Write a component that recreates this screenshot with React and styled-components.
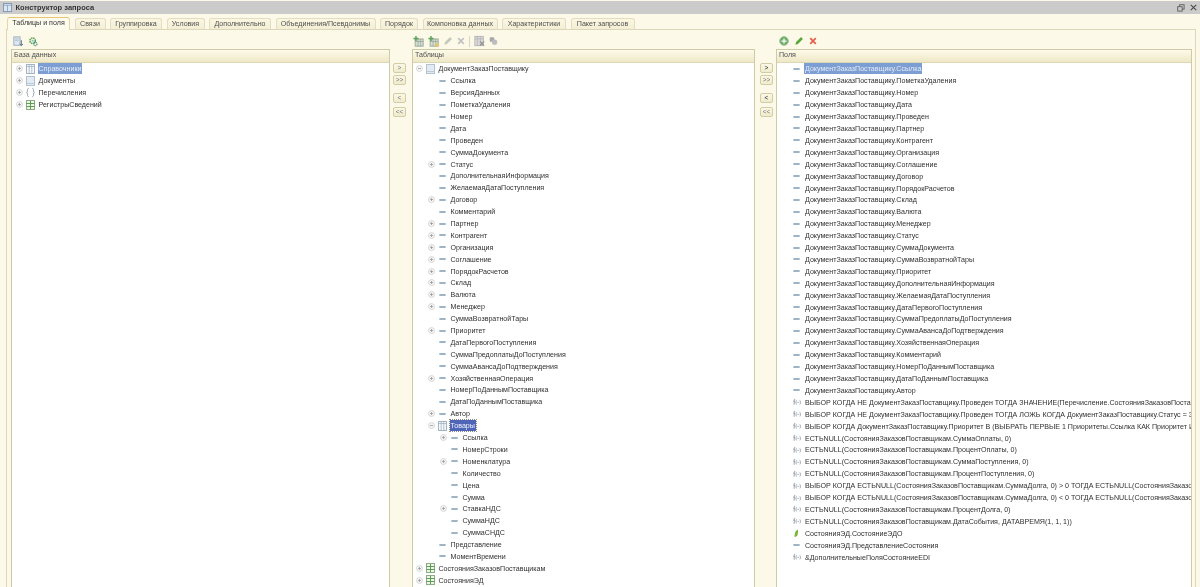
import React from "react";
import styled, { createGlobalStyle } from "styled-components";

const Global = createGlobalStyle`
  html, body { margin: 0; padding: 0; background: #fcf9e8; }
  #root { width: 1200px; height: 587px; overflow: hidden; }
`;

const Page = styled.div`
  width: 1200px; height: 587px; overflow: hidden; background: #fcf9e8;
  font-family: "Liberation Sans", Arial, sans-serif; font-size: 7.1px; color: #303030;
  display: flex; flex-direction: column; padding-top: 1px; box-sizing: border-box;
  filter: blur(0.3px);
`;
const TitleBar = styled.div`
  height: 13px; flex: none; background: #cbcbcb; display: flex; align-items: center; padding: 0 3px 0 3px;
`;
const TitleText = styled.span`
  margin-left: 3.500px; font-weight: 700; font-size: 7.5px; color: #333; flex: 1;
`;
const TabBar = styled.div`
  height: 16px; flex: none; display: flex; align-items: flex-end; padding-left: 7px; gap: 4.5px;
  position: relative; z-index: 1; margin-bottom: -1px;
`;
const Tab = styled.div`
  height: 12px; box-sizing: border-box; width: ${p => p.$w}px; flex: none; text-align: center; line-height: 11px;
  border: 1px solid ${p => (p.$active ? "#e8d7a6" : "#e2ddc0")}; border-bottom: ${p => (p.$active ? "none" : "1px solid #dcd7b8")};
  border-radius: 3px 3px 0 0; color: #505050;
  background: ${p => (p.$active ? "#fdfbee" : "linear-gradient(#fbf7e2, #f3eed4)")};
  ${p => p.$active && "height: 13px; color: #333; border-top: 1px solid #e6c47a;"}
`;
const Body = styled.div`
  flex: 1; min-height: 0; margin: 0 4px 0 6px; border: 1px solid #dcd7b8; border-bottom: none; padding: 3px 0 0 4px;
  display: grid; grid-template-columns: 379px 22px 343px 21px 416px; grid-template-rows: 16px 1fr;
`;
const Toolbar = styled.div`
  display: flex; align-items: center; gap: ${p => p.$gap}px; padding-left: ${p => p.$pad}px; height: 16px;
`;
const Sep = styled.div` width: 1px; height: 11px; background: #dcd8c0; `;
const Panel = styled.section`
  grid-row: 2; border: 1px solid #cfcaa6; border-bottom: none; background: #fff; min-width: 0; overflow: hidden;
  display: flex; flex-direction: column;
`;
const PanelHead = styled.div`
  height: 12px; flex: none; line-height: 11px; padding-left: 2px; color: #505050;
  background: linear-gradient(#fdfaea, #efe8c6); border-bottom: 1px solid #dcd7b4;
`;
const List = styled.div` padding-top: 0; `;
const Row = styled.div`
  height: ${p => p.$h}px; display: flex; align-items: center; padding-left: ${p => p.$indent}px; white-space: nowrap;
`;
const Slot = styled.span`
  width: ${p => p.$w}px; flex: none; display: flex; align-items: center; justify-content: center;
`;
const Label = styled.span`
  margin-left: 2px; padding: 0 1px; line-height: 12px; height: 11px; flex: none;
  ${p => p.$sel === "soft" && "background: #7d9ed2; color: #e4ebf7;"}
  ${p => p.$sel === "hard" && "background: #4f66b8; color: #f4f5fb; outline: 1px dotted #8b8b8b;"}
`;
const Arrows = styled.div`
  grid-row: 2; display: flex; flex-direction: column; align-items: center; padding-top: 14px;
  padding-left: ${p => p.$pl}px; padding-right: ${p => p.$pr}px;
`;
const ArrowBtn = styled.div`
  width: 13px; height: 10px; box-sizing: border-box; border: 1px solid #d2cda6; border-radius: 2px;
  background: linear-gradient(#fbf8e6, #f0ebcd); font-size: 6.5px; line-height: 8px; text-align: center;
  color: ${p => (p.$strong ? "#222" : "#777")}; margin-bottom: ${p => p.$mb}px;
`;

/* icons */
const Exp = ({ open }) => (
  <svg width="7" height="7" viewBox="0 0 7 7">
    <circle cx="3.5" cy="3.5" r="3" fill="#f5f5f5" stroke="#cfcfcf" strokeWidth=".8" />
    <path d={open ? "M2 3.5h3" : "M2 3.5h3M3.5 2v3"} stroke="#9a9a9a" strokeWidth=".8" />
  </svg>
);
const Dash = () => (
  <svg width="7" height="4" viewBox="0 0 7 4"><rect x=".2" y=".9" width="6.6" height="2.2" rx=".8" fill="#9db3c6" /></svg>
);
const TableIcon = () => (
  <svg width="9" height="10" viewBox="0 0 9 10">
    <rect x=".5" y=".5" width="8" height="9" fill="#f4f7fb" stroke="#a3b5c3" />
    <path d="M.5 2.500h8M3.200 1v8M5.800 1v8" stroke="#a3b5c3" strokeWidth=".8" />
  </svg>
);
const DocIcon = () => (
  <svg width="9" height="10" viewBox="0 0 9 10">
    <rect x=".5" y=".5" width="8" height="9" fill="#e2eaf3" stroke="#b4c3d0" />
    <path d="M.5 7.500h8" stroke="#b4c3d0" strokeWidth=".8" />
  </svg>
);
const EnumIcon = () => (
  <svg width="9" height="11" viewBox="0 0 10 11" fill="none" stroke="#8796a4" strokeWidth=".9">
    <path d="M3 .8C1.500 1 1.600 2.500 1.600 4c0 1-.4 1.400-1 1.500.6.100 1 .5 1 1.500 0 1.500-.1 3 1.400 3.200" />
    <path d="M7 .8C8.500 1 8.400 2.500 8.400 4c0 1 .4 1.400 1 1.500-.6.100-1 .5-1 1.500 0 1.500.1 3-1.400 3.200" />
  </svg>
);
const RegIcon = () => (
  <svg width="9" height="10" viewBox="0 0 9 10">
    <rect x=".5" y=".5" width="8" height="9" fill="#edf5e6" stroke="#8dab84" />
    <path d="M.5 3.500h8M.5 6.500h8M4.500 1v8" stroke="#4f9549" strokeWidth=".9" />
  </svg>
);
const Fx = () => (
  <svg width="8" height="8" viewBox="0 0 10 9" fill="none" stroke="#76818c" strokeWidth=".9">
    <path d="M2.800 1.200C1.800.8 1.500 1.400 1.500 2.400V8M.5 3.500h2" />
    <path d="M4.400 2.500C3.500 4 3.500 6 4.400 7.500M8.600 2.500C9.500 4 9.500 6 8.600 7.500M5.700 5h1.600" />
  </svg>
);
const Leaf = () => (
  <svg width="7" height="9" viewBox="0 0 8 10">
    <path d="M5.800.8C3.500 1.500 2.500 3 2 5.500 1.800 6.800 1.800 8 1.700 9c1.900-.3 3.300-1 3.700-3.200.3-1.700.3-3.400.4-5z" fill="#7ab62e" />
  </svg>
);
const AddDoc = () => (
  <svg width="10" height="11" viewBox="0 0 12 13">
    <rect x="1" y="1" width="7.500" height="10" fill="#dfe8f2" stroke="#8ea3b5" />
    <path d="M2.500 3.500h4.500M2.500 5.500h4.500" stroke="#a9bac8" />
    <path d="M10 5v6M8 9.500l2 2 2-2" stroke="#3b5876" fill="none" />
  </svg>
);
const GearGreen = () => (
  <svg width="10" height="11" viewBox="0 0 13 13">
    <circle cx="6" cy="5.500" r="3.500" fill="none" stroke="#4c9f4a" strokeWidth="2" strokeDasharray="1.800 1" />
    <circle cx="6" cy="5.500" r="1.400" fill="#7cc2dc" />
    <circle cx="9.500" cy="9.800" r="2.200" fill="none" stroke="#2f7f66" strokeWidth="1.400" strokeDasharray="1.200 .8" />
  </svg>
);
const TablePlus = ({ swap }) => (
  <svg width="11" height="11" viewBox="0 0 13 13">
    <rect x="2.500" y="3.500" width="9.500" height="8.500" fill="#d6e0d6" stroke="#93a093" />
    <path d="M2.500 6.500h9.500M6 3.500v8.500M9 3.500v8.500" stroke="#93a093" strokeWidth=".8" />
    <path d="M3.500 0v6M.5 3h6" stroke="#5ba558" strokeWidth="1.700" />
    {swap && <rect x="8.500" y="8.500" width="4" height="4" fill="#e6c56e" />}
  </svg>
);
const Pencil = ({ c = "#c3c8bb", w = 10 }) => (
  <svg width={w} height={w} viewBox="0 0 11 11">
    <path d="M7.800 1.200l2 2-5.500 5.500-2.800.8.800-2.800z" fill={c} />
  </svg>
);
const Cross = ({ c = "#c2c2c2" }) => (
  <svg width="8" height="8" viewBox="0 0 10 10">
    <path d="M1.500 1.500l7 7M8.500 1.500l-7 7" stroke={c} strokeWidth="2.200" />
  </svg>
);
const TableX = () => (
  <svg width="11" height="12" viewBox="0 0 13 13">
    <rect x="1" y="1" width="10" height="11" fill="#dadada" stroke="#b0b0b0" />
    <path d="M1 4h10M4 1v11M7.500 1v11" stroke="#b0b0b0" strokeWidth=".8" />
    <path d="M7 7l5 5M12 7l-5 5" stroke="#8e8e8e" strokeWidth="1.300" />
  </svg>
);
const GrayBlob = () => (
  <svg width="9" height="10" viewBox="0 0 12 12">
    <rect x="1" y="1" width="6" height="6" rx="1" fill="#a8a8a8" />
    <circle cx="7.500" cy="7.500" r="3.500" fill="#bdbdbd" />
  </svg>
);
const AddCircle = () => (
  <svg width="10" height="10" viewBox="0 0 12 12">
    <circle cx="6" cy="6" r="5.300" fill="#72ad6c" stroke="#9cc699" />
    <path d="M6 3v6M3 6h6" stroke="#fff" strokeWidth="1.500" />
  </svg>
);
const WinIcon = () => (
  <svg width="9" height="9" viewBox="0 0 10 10">
    <rect x=".5" y=".5" width="9" height="9" fill="#dbe6f3" stroke="#7d95b0" />
    <path d="M.5 2.500h9M5 2.500v7" stroke="#7d95b0" strokeWidth=".8" />
  </svg>
);
const RestoreIcon = () => (
  <svg width="8" height="8" viewBox="0 0 9 9" fill="none" stroke="#5a5a5a" strokeWidth="1">
    <rect x="3" y=".8" width="5" height="5" /><rect x=".8" y="3" width="5" height="5" fill="#cbcbcb" />
  </svg>
);
const CloseIcon = () => (
  <svg width="7" height="7" viewBox="0 0 9 9"><path d="M1 1l7 7M8 1L1 8" stroke="#4a4a4a" strokeWidth="1.400" /></svg>
);

const glyphs = { dash: Dash, table: TableIcon, doc: DocIcon, enum: EnumIcon, reg: RegIcon, fx: Fx, leaf: Leaf };

const TreeRow = ({ level = 0, base, step, h, exp, icon, text, sel }) => {
  const G = glyphs[icon];
  return (
    <Row $indent={base + level * step} $h={h}>
      <Slot $w={11}>{exp && <Exp open={exp === "-"} />}</Slot>
      <Slot $w={11}><G /></Slot>
      <Label $sel={sel}>{text}</Label>
    </Row>
  );
};

const tabs = [
  ["Таблицы и поля", 63], ["Связи", 31], ["Группировка", 52], ["Условия", 38], ["Дополнительно", 62],
  ["Объединения/Псевдонимы", 100], ["Порядок", 38], ["Компоновка данных", 75], ["Характеристики", 64], ["Пакет запросов", 64],
];

const leftRows = [
  { exp: "+", icon: "table", text: "Справочники", sel: "soft" },
  { exp: "+", icon: "doc", text: "Документы" },
  { exp: "+", icon: "enum", text: "Перечисления" },
  { exp: "+", icon: "reg", text: "РегистрыСведений" },
];

const f = (text, exp) => ({ level: 1, icon: "dash", text, exp });
const g = (text, exp) => ({ level: 2, icon: "dash", text, exp });
const centerRows = [
  { exp: "-", icon: "doc", text: "ДокументЗаказПоставщику" },
  f("Ссылка"), f("ВерсияДанных"), f("ПометкаУдаления"), f("Номер"), f("Дата"), f("Проведен"), f("СуммаДокумента"),
  f("Статус", "+"), f("ДополнительнаяИнформация"), f("ЖелаемаяДатаПоступления"), f("Договор", "+"), f("Комментарий"),
  f("Партнер", "+"), f("Контрагент", "+"), f("Организация", "+"), f("Соглашение", "+"), f("ПорядокРасчетов", "+"),
  f("Склад", "+"), f("Валюта", "+"), f("Менеджер", "+"), f("СуммаВозвратнойТары"), f("Приоритет", "+"),
  f("ДатаПервогоПоступления"), f("СуммаПредоплатыДоПоступления"), f("СуммаАвансаДоПодтверждения"),
  f("ХозяйственнаяОперация", "+"), f("НомерПоДаннымПоставщика"), f("ДатаПоДаннымПоставщика"), f("Автор", "+"),
  { level: 1, exp: "-", icon: "table", text: "Товары", sel: "hard" },
  g("Ссылка", "+"), g("НомерСтроки"), g("Номенклатура", "+"), g("Количество"), g("Цена"), g("Сумма"),
  g("СтавкаНДС", "+"), g("СуммаНДС"), g("СуммаСНДС"),
  f("Представление"), f("МоментВремени"),
  { exp: "+", icon: "reg", text: "СостоянияЗаказовПоставщикам" },
  { exp: "+", icon: "reg", text: "СостоянияЭД" },
];

const P = "ДокументЗаказПоставщику.";
const S = "СостоянияЗаказовПоставщикам.";
const rightRows = [
  ...["Ссылка", "ПометкаУдаления", "Номер", "Дата", "Проведен", "Партнер", "Контрагент", "Организация", "Соглашение", "Договор",
    "ПорядокРасчетов", "Склад", "Валюта", "Менеджер", "Статус", "СуммаДокумента", "СуммаВозвратнойТары", "Приоритет",
    "ДополнительнаяИнформация", "ЖелаемаяДатаПоступления", "ДатаПервогоПоступления", "СуммаПредоплатыДоПоступления",
    "СуммаАвансаДоПодтверждения", "ХозяйственнаяОперация", "Комментарий", "НомерПоДаннымПоставщика", "ДатаПоДаннымПоставщика", "Автор",
  ].map((t, i) => ({ icon: "dash", text: P + t, sel: i === 0 ? "soft" : undefined })),
  { icon: "fx", text: `ВЫБОР КОГДА НЕ ${P}Проведен ТОГДА ЗНАЧЕНИЕ(Перечисление.СостоянияЗаказовПоставщикам.Закрыт)` },
  { icon: "fx", text: `ВЫБОР КОГДА НЕ ${P}Проведен ТОГДА ЛОЖЬ КОГДА ${P}Статус = ЗНАЧЕНИЕ(Перечисление)` },
  { icon: "fx", text: `ВЫБОР КОГДА ${P}Приоритет В (ВЫБРАТЬ ПЕРВЫЕ 1 Приоритеты.Ссылка КАК Приоритет ИЗ Справочник.Приоритеты)` },
  { icon: "fx", text: `ЕСТЬNULL(${S}СуммаОплаты, 0)` },
  { icon: "fx", text: `ЕСТЬNULL(${S}ПроцентОплаты, 0)` },
  { icon: "fx", text: `ЕСТЬNULL(${S}СуммаПоступления, 0)` },
  { icon: "fx", text: `ЕСТЬNULL(${S}ПроцентПоступления, 0)` },
  { icon: "fx", text: `ВЫБОР КОГДА ЕСТЬNULL(${S}СуммаДолга, 0) > 0 ТОГДА ЕСТЬNULL(${S}СуммаДолга, 0) ИНАЧЕ 0 КОНЕЦ` },
  { icon: "fx", text: `ВЫБОР КОГДА ЕСТЬNULL(${S}СуммаДолга, 0) < 0 ТОГДА ЕСТЬNULL(${S}СуммаДолга, 0) ИНАЧЕ 0 КОНЕЦ` },
  { icon: "fx", text: `ЕСТЬNULL(${S}ПроцентДолга, 0)` },
  { icon: "fx", text: `ЕСТЬNULL(${S}ДатаСобытия, ДАТАВРЕМЯ(1, 1, 1))` },
  { icon: "leaf", text: "СостоянияЭД.СостояниеЭДО" },
  { icon: "dash", text: "СостоянияЭД.ПредставлениеСостояния" },
  { icon: "fx", text: "&ДополнительныеПоляСостояниеEDI" },
];

const ArrowColumn = ({ strong, pl, pr }) => (
  <Arrows $pl={pl} $pr={pr}>
    <ArrowBtn $strong={strong} $mb={2}>&gt;</ArrowBtn>
    <ArrowBtn $mb={8}>&gt;&gt;</ArrowBtn>
    <ArrowBtn $strong={strong} $mb={4}>&lt;</ArrowBtn>
    <ArrowBtn $mb={0}>&lt;&lt;</ArrowBtn>
  </Arrows>
);

export default function App() {
  return (
    <Page>
      <Global />
      <TitleBar>
        <WinIcon />
        <TitleText>Конструктор запроса</TitleText>
        <RestoreIcon />
        <Slot $w={5} />
        <CloseIcon />
      </TitleBar>
      <TabBar>
        {tabs.map(([t, w], i) => <Tab key={t} $w={w} $active={i === 0}>{t}</Tab>)}
      </TabBar>
      <Body>
        <Toolbar $gap={5} $pad={2}><AddDoc /><GearGreen /></Toolbar>
        <div />
        <Toolbar $gap={4} $pad={1}>
          <TablePlus /><TablePlus swap /><Pencil /><Cross /><Sep /><TableX /><GrayBlob />
        </Toolbar>
        <div />
        <Toolbar $gap={5} $pad={3}><AddCircle /><Pencil c="#5aa83a" /><Cross c="#e4604c" /></Toolbar>

        <Panel>
          <PanelHead>База данных</PanelHead>
          <List>{leftRows.map(r => <TreeRow key={r.text} base={1.5} step={0} h={11.9} {...r} />)}</List>
        </Panel>
        <ArrowColumn pl={0} pr={3} />
        <Panel>
          <PanelHead>Таблицы</PanelHead>
          <List>{centerRows.map((r, i) => <TreeRow key={i} base={0.5} step={12} h={11.9} {...r} />)}</List>
        </Panel>
        <ArrowColumn strong pl={2} pr={0} />
        <Panel>
          <PanelHead>Поля</PanelHead>
          <List>{rightRows.map(r => <TreeRow key={r.text} base={3} step={0} h={11.91} {...r} />)}</List>
        </Panel>
      </Body>
    </Page>
  );
}
